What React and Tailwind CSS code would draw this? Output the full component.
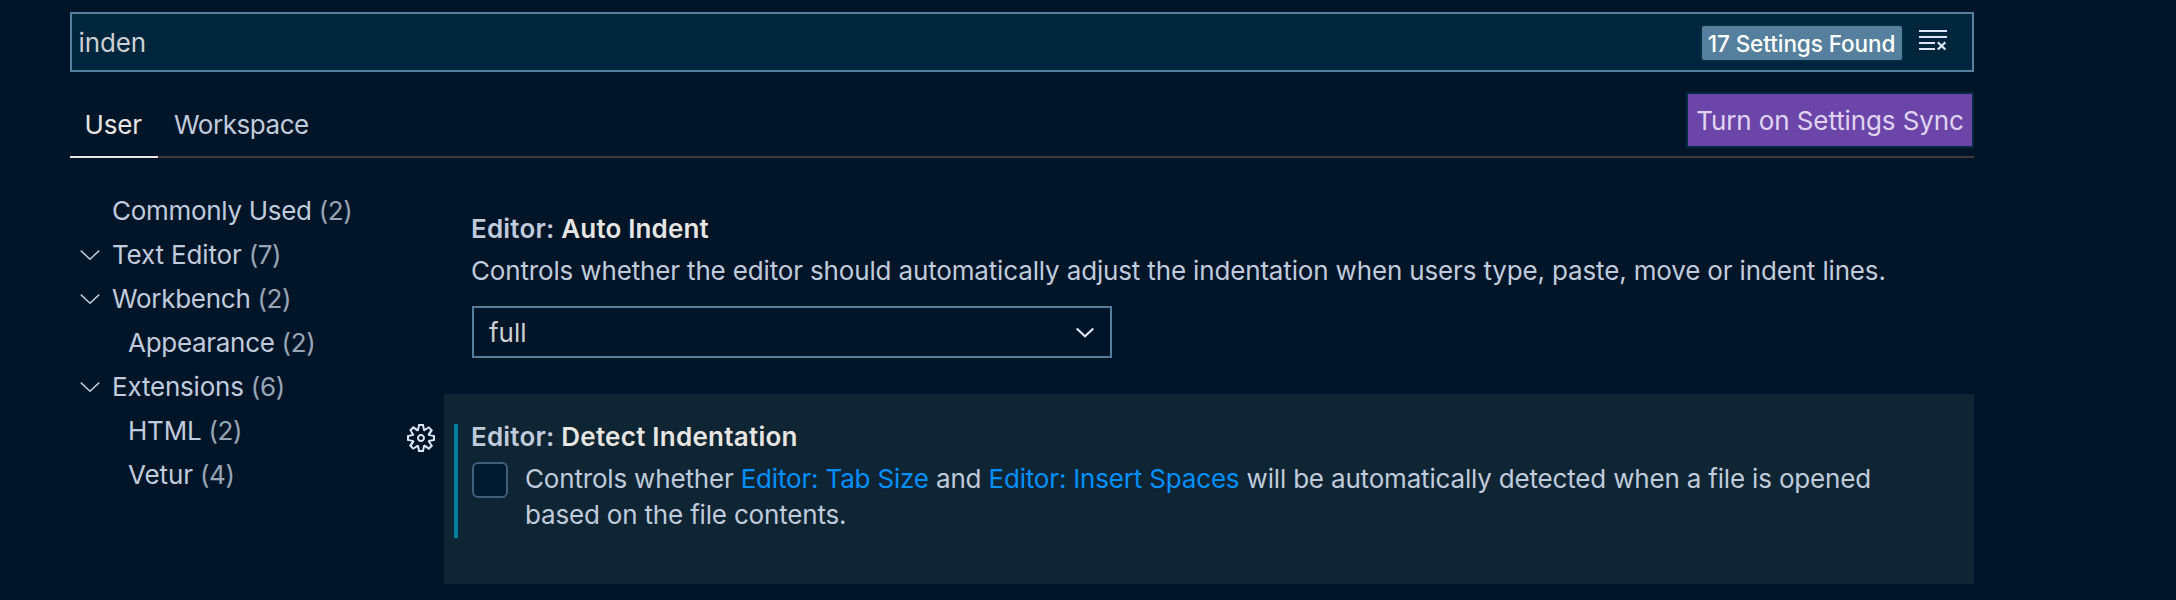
const tree = [
  { name: "Commonly Used", count: 2, pad: "pl-[42px]", track: "tracking-[-0.3px]" },
  { name: "Text Editor", count: 7, open: true, track: "tracking-[-0.15px]" },
  { name: "Workbench", count: 2, open: true, track: "tracking-[-0.28px]" },
  { name: "Appearance", count: 2, pad: "pl-[58px]", track: "tracking-[-0.3px]" },
  { name: "Extensions", count: 6, open: true, track: "tracking-[-0.2px]" },
  { name: "HTML", count: 2, pad: "pl-[58px]", track: "tracking-[-0.2px]" },
  { name: "Vetur", count: 4, pad: "pl-[58px]", track: "tracking-[-0.1px]" },
];

function Chevron({ className }) {
  return (
    <svg viewBox="0 0 20 10" fill="none" stroke="currentColor" className={className}>
      <path d="M0.8 0.6 L10 9.2 L19.2 0.6" />
    </svg>
  );
}

function Gear() {
  return (
    <svg viewBox="0 0 16 16" fill="currentColor" fillRule="evenodd" className="mt-7 mr-[7px] size-8 shrink-0 text-[#dce6f5]">
      <path d="M9.1 4.4L8.6 2H7.4l-.5 2.4-.7.3-2-1.3-.9.8 1.3 2-.2.7-2.4.5v1.2l2.4.5.3.8-1.3 2 .8.8 2-1.3.8.3.4 2.3h1.2l.5-2.4.8-.3 2 1.3.8-.8-1.3-2 .3-.8 2.3-.4V7.4l-2.4-.5-.3-.8 1.3-2-.8-.8-2 1.3-.7-.2zM9.4 1l.5 2.4L12 2.1l2 2-1.4 2.1 2.4.4v2.8l-2.4.5L14 12l-2 2-2.1-1.4-.5 2.4H6.6l-.5-2.4L4 13.9l-2-2 1.4-2.1L1 9.4V6.6l2.4-.5L2.1 4l2-2 2.1 1.4.4-2.4h2.8zm.6 7c0 1.1-.9 2-2 2s-2-.9-2-2 .9-2 2-2 2 .9 2 2zM8 9c.6 0 1-.4 1-1s-.4-1-1-1-1 .4-1 1 .4 1 1 1z" />
    </svg>
  );
}

function ClearAll() {
  return (
    <svg viewBox="0 0 28 20" className="mb-1 mr-[25px] h-5 w-7 text-[#dce6f5]">
      <path fill="currentColor" d="M0 0h28v2H0zM0 6h28v2H0zM0 12h16v2H0zM0 18h16v2H0z" />
      <path fill="none" stroke="currentColor" strokeWidth="2.2" d="M18.8 12.2l7.6 7.4M26.4 12.2l-7.6 7.4" />
    </svg>
  );
}

function TreeRow({ name, count, open, pad, track }) {
  return (
    <li className={`flex h-11 items-center ${pad || "pl-[10px]"}`}>
      {open && <Chevron className="mr-3 h-2.5 w-5 shrink-0 stroke-[1.5]" />}
      <span className={track}>{name}</span>
      <span className="ml-[7px] tracking-[-0.4px] text-[#98a5b5]">({count})</span>
    </li>
  );
}

function Title({ name, track }) {
  return (
    <h3 className="-ml-px font-semibold">
      <span className="tracking-[0.2px]">Editor: </span>
      <span className={`text-[#e8e6e3] ${track}`}>{name}</span>
    </h3>
  );
}

export default function App() {
  return (
    <div className="h-[600px] w-[2176px] bg-[#001528] pt-3 pl-[70px] font-['Inter',sans-serif] text-[26px] leading-9 whitespace-nowrap text-[#c0cbdc]">
      <div className="w-[1904px]">
        <div className="flex h-[60px] items-center border-2 border-[#557f9d] bg-[#00263d] pl-[6.5px] text-[#cccfd2]">
          <span className="mt-0.5 tracking-[-0.1px]">inden</span>
          <span className="mt-0.5 mr-[17px] ml-auto flex h-[34px] w-[200px] items-center justify-center rounded-[2px] bg-[#557f9d] pt-0.5 pr-px text-[22.5px] font-medium tracking-[-0.08px] text-white ring-2 ring-[#052b42]">
            17 Settings Found
          </span>
          <ClearAll />
        </div>
        <div className="flex h-[86px] border-b-2 border-[#3f3c3a]">
          <div className="-mb-0.5 w-[88px] border-b-2 border-[#e8e6e3] pt-[35px] pl-[14.5px] tracking-[-0.2px] text-[#e8e6e3]">User</div>
          <div className="pt-[35px] pl-4 tracking-[-0.45px]">Workspace</div>
          <button className="mt-5 ml-auto h-14 w-[288px] border-2 border-[#052b42] bg-[#6b46a8] pt-0.5 tracking-[-0.1px] text-[#e0d4f0]">
            Turn on Settings Sync
          </button>
        </div>
        <div className="flex">
          <ul className="w-[335px] pt-[31px]">
            {tree.map((t) => (
              <TreeRow key={t.name} {...t} />
            ))}
          </ul>
          <div className="flex-1">
            <div className="pt-[53px] pl-[67px]">
              <Title name="Auto Indent" track="tracking-[0.15px]" />
              <p className="mt-1.5 -ml-px tracking-[-0.155px]">
                Controls whether the editor should automatically adjust the indentation when users type, paste, move or
                indent lines.
              </p>
              <div className="mt-[17px] flex h-[52px] w-[640px] items-center border-2 border-[#557f9d] pl-[15px] text-[#cccfd2]">
                <span className="mt-0.5">full</span>
                <Chevron className="mr-4 ml-auto h-[9px] w-[18px] overflow-visible stroke-[2.4] text-[#dce6f5]" />
              </div>
            </div>
            <div className="flex pt-9">
              <Gear />
              <div className="flex h-[190px] flex-1 bg-[#0f2534] pl-2.5">
                <div className="mt-[30px] mr-[14px] h-[114px] w-1 bg-[#007f9c]" />
                <div className="pt-[25px]">
                  <Title name="Detect Indentation" track="tracking-[0.25px]" />
                  <div className="mt-1.5 flex">
                    <span className="mt-px mr-[17px] size-9 rounded-[6px] border-2 border-[#3f6078] bg-[#001b2f]" />
                    <p className="tracking-[-0.18px]">
                      Controls whether <a className="text-[#0090ff]">Editor: Tab Size</a> and{" "}
                      <a className="text-[#0090ff]">Editor: Insert Spaces</a> will be automatically detected when a file
                      is opened
                      <br />
                      based on the file contents.
                    </p>
                  </div>
                </div>
              </div>
            </div>
          </div>
        </div>
      </div>
    </div>
  );
}
